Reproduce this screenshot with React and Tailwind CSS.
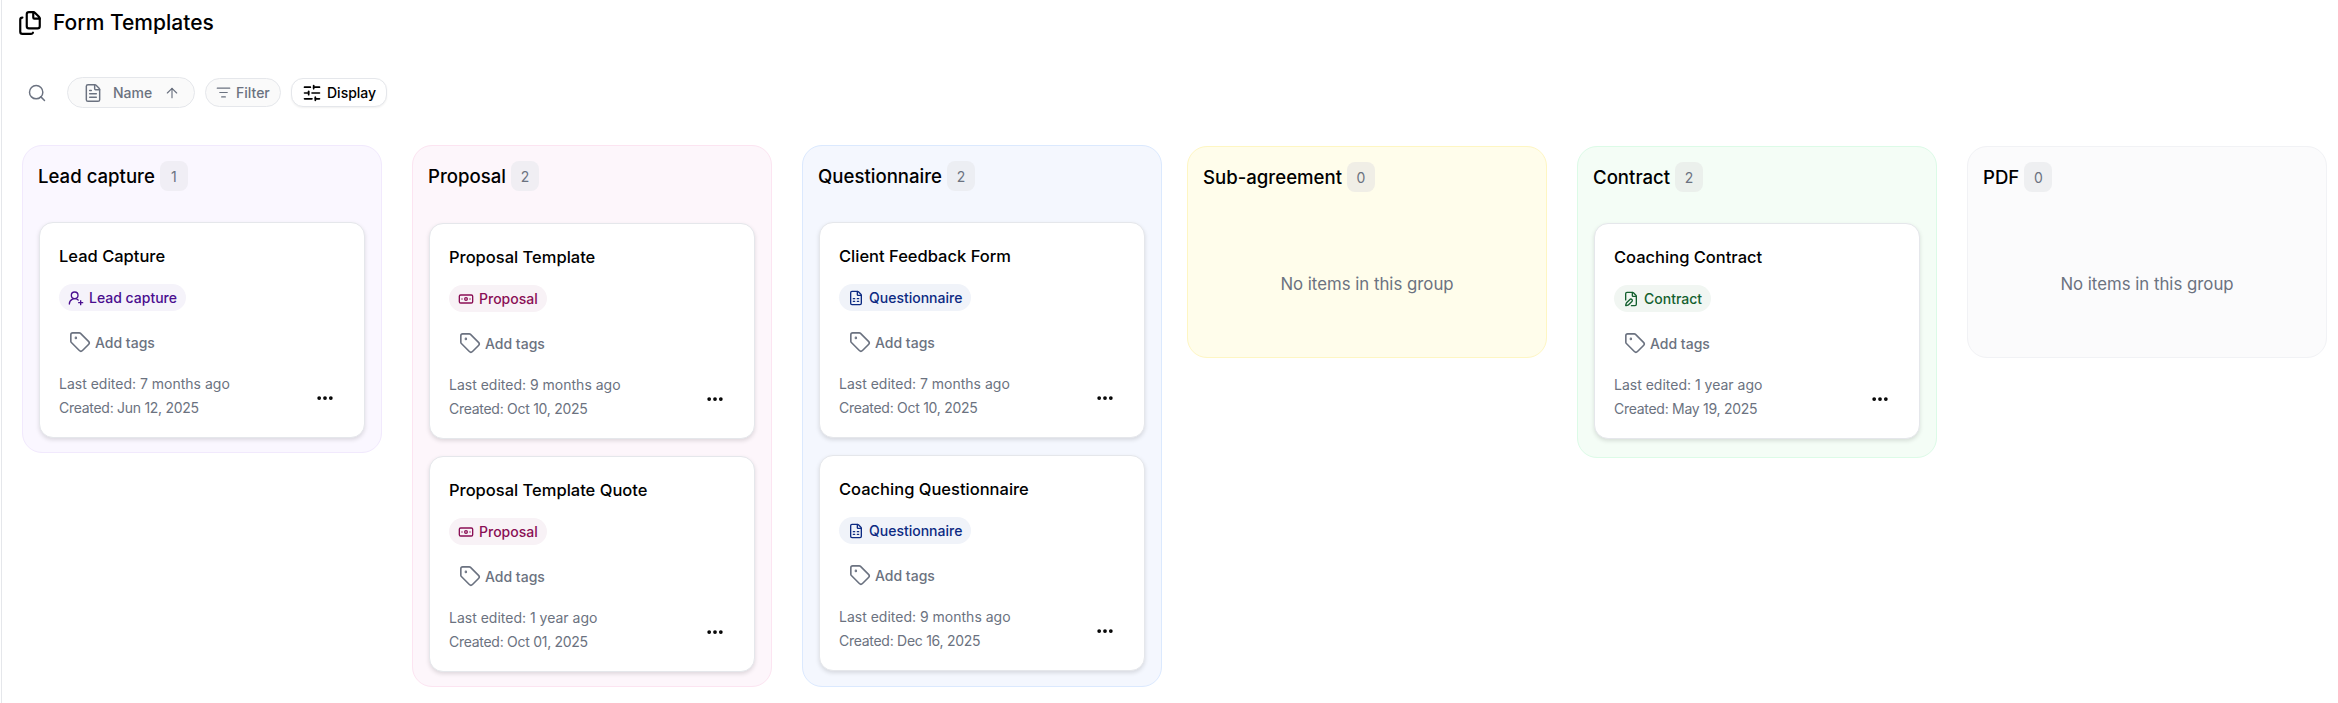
import React from "react";
import { Files, Search, FileText, ArrowUp, ListFilter, SlidersHorizontal, Tag, Ellipsis, UserRoundPlus, Banknote, FileSpreadsheet, FilePen } from "lucide-react";

const KINDS = {
  lead: { label: "Lead capture", Icon: UserRoundPlus, cls: "bg-[#f5f3fa] text-[#4a0e8f]" },
  proposal: { label: "Proposal", Icon: Banknote, cls: "bg-[#f8f2f6] text-[#8a0f55]" },
  questionnaire: { label: "Questionnaire", Icon: FileSpreadsheet, cls: "bg-[#f0f3f9] text-[#0c2a82]" },
  contract: { label: "Contract", Icon: FilePen, cls: "bg-[#f1f6f2] text-[#14602f]" },
};

function Card({ title, kind, edited, created }) {
  const k = KINDS[kind];
  const I = k.Icon;
  return (
    <div className="bg-white border border-[#e5e7eb] rounded-[14px] shadow-[0_2px_4px_rgba(0,0,0,0.12)] pl-[19px] pr-5 pt-[21px] pb-[17px]">
      <div className="text-[16.5px] leading-6 font-medium text-black">{title}</div>
      <div className="mt-4 flex">
        <span className={`inline-flex items-center gap-[5px] h-[27px] pl-[9px] pr-[9px] rounded-full text-[14px] font-medium ${k.cls}`}>
          <I size={16} strokeWidth={2} />
          {k.label}
        </span>
      </div>
      <div className="mt-[19px] ml-[10px] flex items-center gap-[4px] h-6 text-[14px] font-medium text-[#6b7280]">
        <Tag size={22} strokeWidth={1.75} />
        Add tags
      </div>
      <div className="mt-[18px] flex items-center justify-between">
        <div className="text-[14px] leading-6 text-[#6b7280]">
          <div>Last edited: {edited}</div>
          <div className="tracking-[-0.28px]">Created: {created}</div>
        </div>
        <Ellipsis size={20} strokeWidth={2.5} className="mr-[9px] mt-[4px] text-black" />
      </div>
    </div>
  );
}

function Column({ title, count, cls, badge, children, extra = "", bodyTop = "mt-[31px]" }) {
  return (
    <div className={`w-[360px] shrink-0 border rounded-[20px] pt-[15px] px-4 ${cls} ${extra}`}>
      <div className="flex items-center gap-[5px] h-[30px]">
        <span className="ml-[-1px] pt-[2px] text-[18.6px] font-medium text-black">{title}</span>
        <span className={`w-7 h-[30px] rounded-lg flex items-center justify-center text-[14px] text-[#6b7280] ${badge}`}>{count}</span>
      </div>
      <div className={`${bodyTop} flex flex-col gap-[17px]`}>{children}</div>
    </div>
  );
}

function Empty() {
  return <div className="pt-[49px] pb-[47px] text-center text-[16.8px] leading-6 text-[#6b7280]">No items in this group</div>;
}

export default function App() {
  return (
    <div className="ml-px min-h-[703px] border-l border-[#e5e7eb] bg-white overflow-hidden font-['Inter',sans-serif]">
      <div className="h-[46px] pl-[15px] flex items-center gap-[10px]">
        <Files size={26} strokeWidth={2} className="text-black" />
        <h1 className="text-[21px] font-medium text-black">Form Templates</h1>
      </div>

      <div className="mt-[31px] h-[31px] flex items-center pl-[25px]">
        <Search size={20} strokeWidth={1.75} className="text-[#6b7280]" />
        <div className="ml-[20px] h-[31px] w-[128px] flex items-center pl-[15px] rounded-full border border-[#e5e7eb] bg-[#fafafa] text-[14px] font-medium text-[#6b7280]">
          <FileText size={20} strokeWidth={1.75} />
          <span className="ml-[10px]">Name</span>
          <ArrowUp size={16} strokeWidth={1.75} className="ml-[12px]" />
        </div>
        <div className="ml-[10px] h-[29px] w-[76px] flex items-center pl-[10px] gap-[5px] rounded-full border border-[#e5e7eb] bg-[#fafafa] text-[14px] font-medium text-[#6b7280]">
          <ListFilter size={15} strokeWidth={1.75} />
          Filter
        </div>
        <div className="ml-[10px] h-[29px] w-[96px] flex items-center pl-[10px] gap-[5px] rounded-[12px] border border-[#e5e7eb] bg-white shadow-[0_1px_2px_rgba(0,0,0,0.06)] text-[14px] font-medium text-black">
          <SlidersHorizontal size={20} strokeWidth={2} />
          Display
        </div>
      </div>

      <div className="mt-[37px] pl-[20px] flex items-start gap-[30px]">
        <Column title="Lead capture" count="1" cls="bg-[#faf7ff] border-[#f1e9fd] pb-[14px]" badge="bg-[#f0eef5]">
          <Card title="Lead Capture" kind="lead" edited="7 months ago" created="Jun 12, 2025" />
        </Column>
        <Column title="Proposal" count="2" cls="bg-[#fdf6fb] border-[#fce4f1] pb-[14px]" badge="bg-[#f0eef3]" bodyTop="mt-[32px]">
          <Card title="Proposal Template" kind="proposal" edited="9 months ago" created="Oct 10, 2025" />
          <Card title="Proposal Template Quote" kind="proposal" edited="1 year ago" created="Oct 01, 2025" />
        </Column>
        <Column title="Questionnaire" count="2" cls="bg-[#f4f7fe] border-[#dbe9fe] pb-[15px]" badge="bg-[#eceef3]">
          <Card title="Client Feedback Form" kind="questionnaire" edited="7 months ago" created="Oct 10, 2025" />
          <Card title="Coaching Questionnaire" kind="questionnaire" edited="9 months ago" created="Dec 16, 2025" />
        </Column>
        <Column title="Sub-agreement" count="0" cls="bg-[#fffdeb] border-[#fef6c3] pb-[14px]" badge="bg-[#f0eee6]" extra="ml-[-5px] mt-px">
          <Empty />
        </Column>
        <Column title="Contract" count="2" cls="bg-[#f4fdf6] border-[#dcfbe7] pb-[18px]" badge="bg-[#ebf0ec]" extra="mt-px">
          <Card title="Coaching Contract" kind="contract" edited="1 year ago" created="May 19, 2025" />
        </Column>
        <Column title="PDF" count="0" cls="bg-[#fbfbfc] border-[#f1f2f5] pb-[14px]" badge="bg-[#eeeff1]" extra="mt-px">
          <Empty />
        </Column>
      </div>
    </div>
  );
}
